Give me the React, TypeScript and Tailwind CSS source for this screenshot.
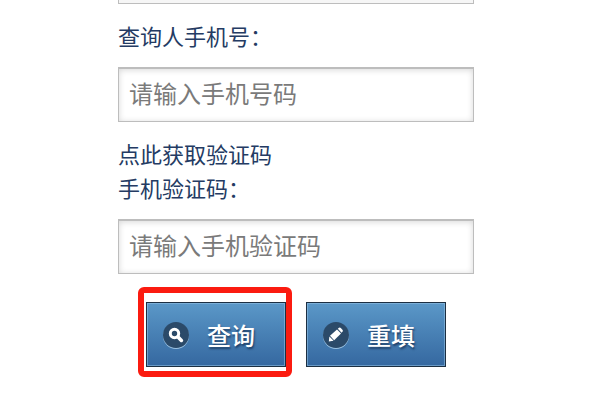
import type { ReactNode } from "react";

const inputClass =
  "block w-full border border-t-2 border-[#bdbdbd] bg-white px-2.5 pb-1.5 text-2xl text-[#757575] shadow-[inset_0_1px_6px_rgba(0,0,0,0.16)] outline-none placeholder:text-[#7a7a7a]";

function Field({
  id,
  label,
  placeholder,
}: {
  id: string;
  label: string;
  placeholder: string;
}) {
  return (
    <>
      <label htmlFor={id} className="block">
        {label}
      </label>
      <input
        id={id}
        type="text"
        placeholder={placeholder}
        className={`mt-[15px] h-[55px] ${inputClass}`}
      />
    </>
  );
}

function ActionButton({
  type,
  icon,
  children,
}: {
  type: "submit" | "reset";
  icon: ReactNode;
  children: ReactNode;
}) {
  return (
    <button
      type={type}
      className="flex h-[65px] w-[140px] items-center border border-[#1c2f42] bg-linear-to-b from-[#5b98c8] to-[#3568a0] pl-4 text-2xl font-medium text-white shadow-[inset_0_0_0_1px_rgba(150,195,230,0.55)] [text-shadow:1px_2px_2px_rgba(15,40,75,0.7)]"
    >
      <span className="mr-[18px] flex size-[26px] items-center justify-center rounded-full bg-[#2b4a69] shadow-[0_1px_0_#9cc3e2]">
        {icon}
      </span>
      {children}
    </button>
  );
}

function SearchIcon() {
  return (
    <svg viewBox="0 0 26 26" className="size-[26px]" aria-hidden="true">
      <circle cx="11.5" cy="11.5" r="4.2" fill="none" stroke="#fff" strokeWidth="3" />
      <path d="M15 15 18.4 18.4" stroke="#fff" strokeWidth="3.6" strokeLinecap="round" />
    </svg>
  );
}

function PencilIcon() {
  return (
    <svg viewBox="0 0 26 26" className="size-[26px]" aria-hidden="true">
      <path d="M5.8 19.4 6.4 14.6 10.6 18.8Z" fill="#fff" />
      <path d="M7 13.8 14 7.4 18 11.6 11.2 18.2Z" fill="#fff" />
      <path d="M14.8 6.8 16 5.8Q17 5.2 17.8 6L19.6 8Q20.2 8.8 19.6 9.6L18.6 10.8Z" fill="#fff" />
    </svg>
  );
}

export default function App() {
  return (
    <main className="pr-2 pb-12 font-['Noto_Sans_CJK_SC',sans-serif]">
      <form
        lang="zh-CN"
        className="mx-auto w-full max-w-[356px] text-[22px] leading-[34px] text-[#243b63]"
        onSubmit={(event) => event.preventDefault()}
      >
        {/* lower edge of the field scrolled off the top */}
        <div className="h-1 border border-t-0 border-[#bdbdbd] bg-[#f6f6f6]" />

        <div className="pt-[14px]">
          <Field id="phone" label="查询人手机号：" placeholder="请输入手机号码" />
        </div>

        <div className="pt-[14px]">
          <a href="#code" className="block">
            点此获取验证码
          </a>
          <Field id="code" label="手机验证码：" placeholder="请输入手机验证码" />
        </div>

        <div className="mt-7 flex justify-center gap-5">
          <div className="relative">
            <ActionButton type="submit" icon={<SearchIcon />}>
              查询
            </ActionButton>
            <div className="pointer-events-none absolute -top-[15px] -right-1.5 -bottom-2.5 -left-2 rounded-md border-6 border-[#fb1b10]" />
          </div>
          <ActionButton type="reset" icon={<PencilIcon />}>
            重填
          </ActionButton>
        </div>
      </form>
    </main>
  );
}
